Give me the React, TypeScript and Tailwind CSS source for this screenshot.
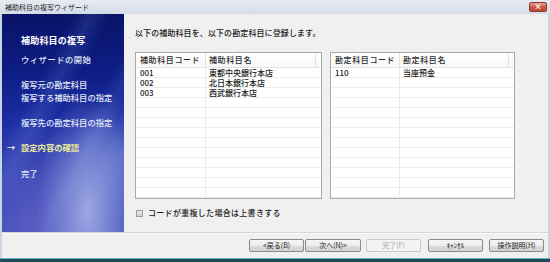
import React from "react";

const ROWS = 13;

function ListBox({
  w,
  c1,
  h1,
  h2,
  rows,
}: {
  w: string;
  c1: string;
  h1: string;
  h2: string;
  rows: [string, string][];
}) {
  const all: [string, string][] = [];
  for (let i = 0; i < ROWS; i++) all.push(rows[i] ?? ["", ""]);
  return (
    <div className={`${w} flex flex-col border border-[#a9a9a9] bg-white`}>
      <div className="flex h-[15px] items-center border-b border-[#e3e3e3] bg-[linear-gradient(#ffffff,#f7f8f9)] text-[8px] text-[#2a2a2a] font-medium">
        <div className={`${c1} h-full flex items-center pl-[4px] border-r border-[#e2e2e2] tracking-[0.6px]`}>{h1}</div>
        <div className="flex-1 h-full flex items-center pl-[3px] border-r border-[#e2e2e2] tracking-[0.6px]">{h2}</div>
        <div className="w-[5px]" />
      </div>
      {all.map((r, i) => (
        <div key={i} className="flex h-[10px] border-b border-[#eeeeee] text-[8px] leading-[10px] text-[#1a1a1a] font-medium">
          <div className={`${c1} h-full pl-[4px] border-r border-[#ececec]`}>{r[0]}</div>
          <div className="flex-1 h-full pl-[3px]">{r[1]}</div>
        </div>
      ))}
    </div>
  );
}

function Btn({ label, w, disabled, cls }: { label: string; w: string; disabled?: boolean; cls?: string }) {
  return (
    <div
      className={`${w} ${cls ?? ""} h-[13px] flex items-center justify-center rounded-[2px] border text-[7px] ${
        disabled
          ? "border-[#c9c9c9] bg-[#f4f4f4] text-[#a8a8a8]"
          : "border-[#8c8c8c] bg-[linear-gradient(#f6f6f6_0%,#ececec_50%,#dcdcdc_51%,#d2d2d2_100%)] text-[#1a1a1a]"
      }`}
    >
      {label}
    </div>
  );
}

export default function App() {
  return (
    <div className="w-[550px] h-[262px] flex flex-col bg-[#c9d5e2] font-['Noto_Sans_CJK_JP','Noto_Sans_CJK_SC',sans-serif] overflow-hidden">
      {/* title bar */}
      <div className="h-[14px] flex items-center justify-between pl-[5px] pr-[3px] bg-[linear-gradient(#e7ecf2,#d3dce6)]">
        <span className="text-[7px] text-[#1e1e1e] leading-none">補助科目の複写ウィザード</span>
        <div className="w-[18px] h-[10px] rounded-[2px] border border-[#8e3a2e] bg-[linear-gradient(#e9a08f,#cc5640_55%,#c2452f)] flex items-center justify-center">
          <span className="text-white text-[8px] font-bold leading-none">×</span>
        </div>
      </div>
      {/* body */}
      <div className="flex-1 flex flex-col mx-[2px] bg-[#f0f0f0]">
        <div className="h-[218px] flex">
          {/* sidebar */}
          <div className="w-[122px] h-full flex flex-col pt-[22px] text-[8.3px] leading-[10px] text-[#e4e8f6] font-medium bg-[radial-gradient(ellipse_at_70%_90%,rgba(200,208,245,0.7),transparent_42%),radial-gradient(ellipse_at_100%_65%,rgba(150,170,235,0.4),transparent_32%),radial-gradient(ellipse_at_25%_95%,rgba(120,110,200,0.45),transparent_40%),linear-gradient(118deg,transparent_30%,rgba(110,140,230,0.18)_38%,transparent_46%,transparent_60%,rgba(110,140,230,0.14)_66%,transparent_72%),linear-gradient(178deg,#081366_0%,#0e1d84_26%,#1c2ea4_50%,#3142b4_74%,#4050bc_100%)]">
            <div className="pl-[19px] text-[9px] font-bold text-white tracking-[0.2px]">補助科目の複写</div>
            <div className="pl-[19px] mt-[8px] tracking-[0.5px]">ウィザードの開始</div>
            <div className="pl-[19px] mt-[15px]">複写元の勘定科目</div>
            <div className="pl-[19px] mt-[3px]">複写する補助科目の指定</div>
            <div className="pl-[19px] mt-[15px]">複写先の勘定科目の指定</div>
            <div className="flex mt-[15px] pl-[5px] text-[#ecec9c] font-bold">
              <span className="w-[14px] text-[#f2f2e0]">→</span>
              <span>設定内容の確認</span>
            </div>
            <div className="pl-[19px] mt-[16px]">完了</div>
          </div>
          {/* content */}
          <div className="flex-1 flex flex-col pl-[11px] pt-[14px]">
            <div className="h-[10px] text-[8px] leading-[10px] text-[#1a1a1a] tracking-[0.1px] font-medium">
              以下の補助科目を、以下の勘定科目に登録します。
            </div>
            <div className="flex gap-[8px] mt-[14px]">
              <ListBox
                w="w-[187px]"
                c1="w-[70px]"
                h1="補助科目コード"
                h2="補助科目名"
                rows={[
                  ["001", "東都中央銀行本店"],
                  ["002", "北日本銀行本店"],
                  ["003", "西武銀行本店"],
                ]}
              />
              <ListBox
                w="w-[185px]"
                c1="w-[69px]"
                h1="勘定科目コード"
                h2="勘定科目名"
                rows={[["110", "当座預金"]]}
              />
            </div>
            <div className="flex items-center mt-[9px] pl-[1px]">
              <div className="w-[7px] h-[7px] border border-[#9c9c9c] bg-[linear-gradient(#e8e8e8,#d0d0d0)]" />
              <span className="ml-[5px] text-[8px] leading-[10px] text-[#1a1a1a] tracking-[0.3px] font-medium">
                コードが重複した場合は上書きする
              </span>
            </div>
          </div>
        </div>
        {/* separator */}
        <div className="h-[1px] bg-[#d6d6d6]" />
        <div className="h-[1px] bg-[#fbfbfb]" />
        {/* buttons */}
        <div className="flex justify-end pr-[4px] pt-[5px]">
          <Btn label="<戻る(B)" w="w-[55px]" />
          <Btn label="次へ(N)>" w="w-[56px]" cls="ml-[1px]" />
          <Btn label="完了(F)" w="w-[55px]" cls="ml-[5px]" disabled />
          <Btn label="ｷｬﾝｾﾙ" w="w-[55px]" cls="ml-[7px]" />
          <Btn label="操作説明(H)" w="w-[55px]" cls="ml-[6px]" />
        </div>
      </div>
      {/* bottom frame */}
      <div className="h-[1px] bg-[#6fb2c2]" />
      <div className="h-[3px] bg-[#1f4a58]" />
    </div>
  );
}
